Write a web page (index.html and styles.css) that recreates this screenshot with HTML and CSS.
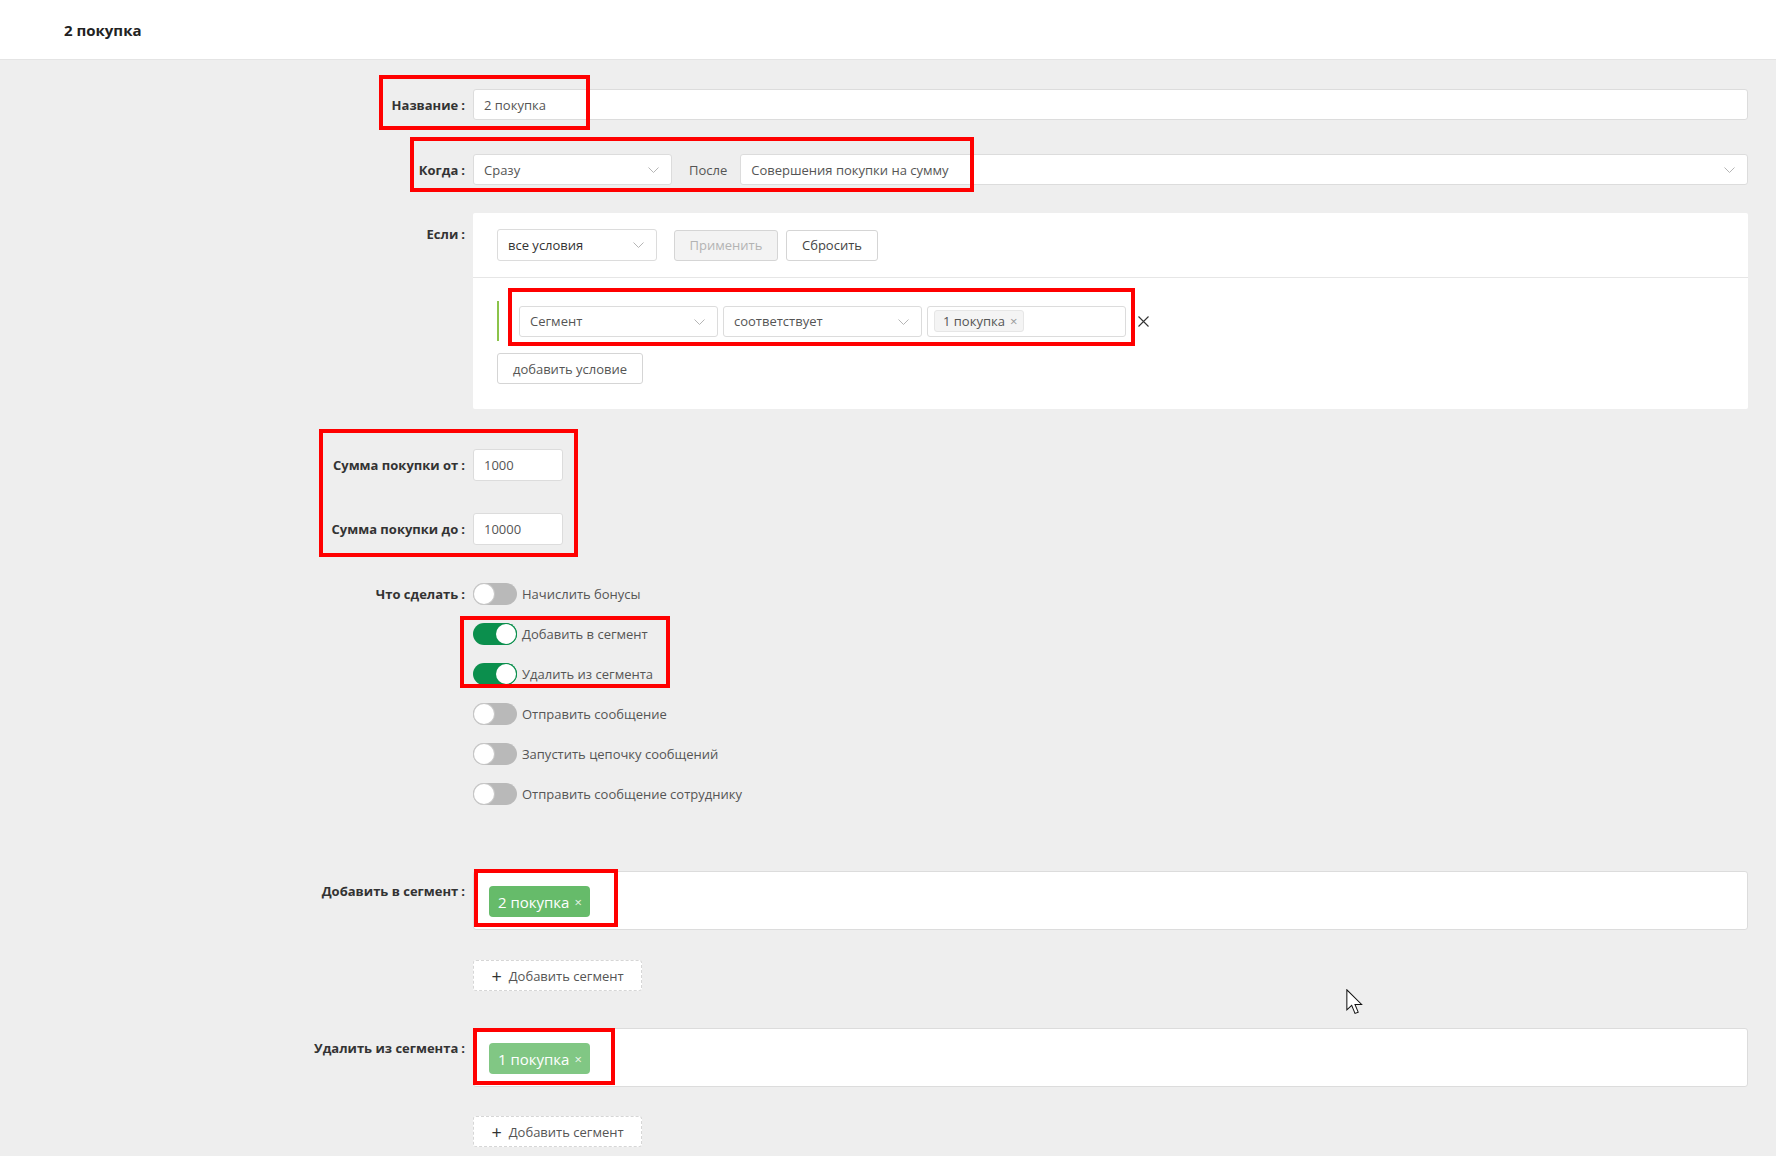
FILE: index.html
```html
<!DOCTYPE html>
<html lang="ru">
<head>
  <meta charset="UTF-8">
  <title>2 покупка</title>
  <link rel="stylesheet" href="styles.css">
</head>
<body>
  <header class="topbar">
    <h1>2 покупка</h1>
  </header>

  <main class="form">
    <!-- Название -->
    <div class="row row-name">
      <div class="label">Название</div>
      <div class="control">
        <div class="field">2 покупка</div>
      </div>
    </div>

    <!-- Когда -->
    <div class="row row-when">
      <div class="label">Когда</div>
      <div class="control when">
        <div class="field select select-short">Сразу<svg class="chev" viewBox="0 0 11 6"><polyline points="0.5,0.5 5.5,5.5 10.5,0.5"/></svg></div>
        <span class="after">После</span>
        <div class="field select select-grow">Совершения покупки на сумму<svg class="chev" viewBox="0 0 11 6"><polyline points="0.5,0.5 5.5,5.5 10.5,0.5"/></svg></div>
      </div>
    </div>

    <!-- Если -->
    <div class="row row-if">
      <div class="label label-top">Если</div>
      <div class="control">
        <div class="panel">
          <div class="panel-head">
            <div class="field select select-mode">все условия<svg class="chev" viewBox="0 0 11 6"><polyline points="0.5,0.5 5.5,5.5 10.5,0.5"/></svg></div>
            <button class="btn btn-disabled">Применить</button>
            <button class="btn btn-reset">Сбросить</button>
          </div>
          <div class="panel-body">
            <div class="cond">
              <div class="field select select-cond">Сегмент<svg class="chev" viewBox="0 0 11 6"><polyline points="0.5,0.5 5.5,5.5 10.5,0.5"/></svg></div>
              <div class="field select select-cond">соответствует<svg class="chev" viewBox="0 0 11 6"><polyline points="0.5,0.5 5.5,5.5 10.5,0.5"/></svg></div>
              <div class="field select-cond multi"><span class="chip">1 покупка <span class="x">×</span></span></div>
              <svg class="remove" viewBox="0 0 11 11" width="11" height="11"><path d="M0.5,0.5 L10.5,10.5 M10.5,0.5 L0.5,10.5"/></svg>
            </div>
            <button class="btn btn-add">добавить условие</button>
          </div>
        </div>
      </div>
    </div>

    <!-- Сумма -->
    <div class="row row-sum1">
      <div class="label">Сумма покупки от</div>
      <div class="control"><div class="field num">1000</div></div>
    </div>
    <div class="row row-sum2">
      <div class="label">Сумма покупки до</div>
      <div class="control"><div class="field num">10000</div></div>
    </div>

    <!-- Что сделать -->
    <div class="row row-actions">
      <div class="label label-toggle">Что сделать</div>
      <div class="control toggles">
        <div class="toggle-line"><span class="switch"></span>Начислить бонусы</div>
        <div class="toggle-line"><span class="switch on"></span>Добавить в сегмент</div>
        <div class="toggle-line"><span class="switch on"></span>Удалить из сегмента</div>
        <div class="toggle-line"><span class="switch"></span>Отправить сообщение</div>
        <div class="toggle-line"><span class="switch"></span>Запустить цепочку сообщений</div>
        <div class="toggle-line"><span class="switch"></span>Отправить сообщение сотруднику</div>
      </div>
    </div>

    <!-- Добавить в сегмент -->
    <div class="row row-add">
      <div class="label label-seg">Добавить в сегмент</div>
      <div class="control">
        <div class="seg-box"><span class="seg-tag">2 покупка <span class="x">×</span></span></div>
      </div>
    </div>
    <div class="row row-addbtn1">
      <div></div>
      <div class="control"><button class="btn-dashed"><span class="plus">+</span>Добавить сегмент</button></div>
    </div>

    <!-- Удалить из сегмента -->
    <div class="row row-del">
      <div class="label label-seg">Удалить из сегмента</div>
      <div class="control">
        <div class="seg-box"><span class="seg-tag faded">1 покупка <span class="x">×</span></span></div>
      </div>
    </div>
    <div class="row row-addbtn2">
      <div></div>
      <div class="control"><button class="btn-dashed"><span class="plus">+</span>Добавить сегмент</button></div>
    </div>
  </main>

  <!-- пометки поверх скриншота -->
  <div class="mark m1"></div>
  <div class="mark m2"></div>
  <div class="mark m3"></div>
  <div class="mark m4"></div>
  <div class="mark m5"></div>
  <div class="mark m6"></div>
  <div class="mark m7"></div>

  <svg class="cursor" viewBox="0 0 14 22" width="18" height="28">
    <path d="M0.6,0.6 L0.6,16.4 L4.4,12.9 L7,19.2 L9.5,18.2 L7,12.1 L12.2,12.1 Z" fill="#fff" stroke="#111" stroke-width="0.8" stroke-linejoin="miter"/>
  </svg>
</body>
</html>
```

FILE: styles.css
```css
/* базовые */
html, body {
  margin: 0;
  padding: 0;
  background-color: #eeeeee;
  color: #333;
  font-family: 'Open Sans', 'Liberation Sans', sans-serif;
  font-size: 13px;
}
*, *::before, *::after {
  box-sizing: border-box;
}
body {
  position: relative;
  min-height: 1156px;
}
/* шапка */
.topbar {
  height: 60px;
  background-color: #fff;
  border-bottom: 1px solid #e4e4e4;
  display: flex;
  align-items: center;
  padding-left: 64px;
}
.topbar h1 {
  margin: 0;
  font-size: 15px;
  font-weight: 700;
  color: #222;
}
/* форма */
.form {
  padding: 29px 28px 0 0;
}
.row {
  display: grid;
  grid-template-columns: 465px 1fr;
  column-gap: 8px;
  align-items: center;
}
.label {
  text-align: right;
  font-weight: 700;
  color: #333;
  white-space: nowrap;
}
.label::after {
  content: ':';
  margin-left: 3px;
}
.label-top {
  align-self: start;
  padding-top: 12px;
}
.label-seg {
  align-self: start;
  padding-top: 11px;
}
.label-toggle {
  align-self: start;
  padding-top: 2px;
}
.row-name { margin-bottom: 34px; }
.row-when { margin-bottom: 28px; }
.row-if { margin-bottom: 40px; }
.row-sum1 { margin-bottom: 32px; }
.row-sum2 { margin-bottom: 38px; }
.row-actions { margin-bottom: 66px; }
.row-add { margin-bottom: 30px; }
.row-addbtn1 { margin-bottom: 37px; }
.row-del { margin-bottom: 29px; }

.field {
  position: relative;
  height: 31px;
  background-color: #fff;
  border: 1px solid #dcdcdc;
  border-radius: 3px;
  padding: 0 10px;
  display: flex;
  align-items: center;
  color: #555;
  white-space: nowrap;
}
.select {
  padding-right: 30px;
}
.chev {
  position: absolute;
  right: 12px;
  top: 12px;
  width: 11px;
  height: 6px;
  fill: none;
  stroke: #b5b5b5;
  stroke-width: 1;
}
.when {
  display: flex;
  align-items: center;
}
.select-short { width: 199px; }
.after {
  margin: 0 13px 0 17px;
  color: #555;
}
.select-grow { flex: 1; }
.num { width: 90px; height: 32px; }

/* Если */
.panel {
  background-color: #fff;
  border-radius: 2px;
}
.panel-head {
  display: flex;
  align-items: center;
  padding: 16px 24px;
  border-bottom: 1px solid #e6e6e6;
}
.select-mode {
  width: 160px;
  height: 32px;
  color: #333;
}
.btn {
  height: 31px;
  padding: 0 13px;
  font-family: inherit;
  font-size: 13px;
  color: #444;
  background-color: #fff;
  border: 1px solid #d5d5d5;
  border-radius: 3px;
}
.panel-head .btn { margin-left: 8px; }
.panel-head .btn-disabled {
  margin-left: 17px;
  width: 104px;
  background-color: #f3f3f3;
  color: #b3b3b3;
}
.panel-head .btn-reset {
  width: 92px;
}
.panel-body {
  padding: 23px 24px 25px;
}
.cond {
  display: flex;
  align-items: center;
  gap: 5px;
  height: 40px;
  border-left: 2px solid #8bc34a;
  padding-left: 20px;
}
.select-cond { width: 199px; }
.multi { padding: 0 6px; }
.chip {
  display: inline-flex;
  align-items: center;
  height: 22px;
  padding: 0 6px 0 8px;
  background-color: #f4f4f4;
  border: 1px solid #e6e6e6;
  border-radius: 3px;
  color: #555;
}
.chip .x {
  margin-left: 5px;
  color: #999;
}
.remove {
  margin-left: 7px;
  fill: none;
  stroke: #333;
  stroke-width: 1.1;
}
.btn-add {
  margin-top: 12px;
  width: 146px;
  color: #555;
}

/* переключатели */
.toggles {
  display: flex;
  flex-direction: column;
  gap: 18px;
}
.toggle-line {
  display: flex;
  align-items: center;
  color: #555;
  height: 22px;
}
.switch {
  position: relative;
  width: 44px;
  height: 22px;
  border-radius: 11px;
  background-color: #b9b9b9;
  margin-right: 5px;
  flex-shrink: 0;
}
.switch::after {
  content: '';
  position: absolute;
  left: 1px;
  top: 1px;
  width: 20px;
  height: 20px;
  border-radius: 50%;
  background-color: #fff;
  box-shadow: 0 0 0 1px #c8c8c8;
}
.switch.on {
  background-color: #0b8f4d;
}
.switch.on::after {
  left: auto;
  right: 1px;
  box-shadow: 0 0 0 1px #0b8f4d;
}

/* сегменты */
.seg-box {
  height: 59px;
  background-color: #fff;
  border: 1px solid #dcdcdc;
  border-radius: 3px;
  padding: 14px 15px;
}
.seg-tag {
  display: inline-flex;
  align-items: center;
  height: 31px;
  padding: 0 8px 0 9px;
  background-color: #66bb6a;
  border-radius: 4px;
  color: #fff;
  font-size: 15px;
}
.seg-tag.faded {
  background-color: #81c784;
}
.seg-tag .x {
  margin-left: 5px;
  font-size: 13px;
  opacity: 0.85;
}
.btn-dashed {
  width: 169px;
  height: 31px;
  font-family: inherit;
  font-size: 13px;
  color: #555;
  background-color: #fff;
  border: 1px dashed #d6d6d6;
  border-radius: 3px;
  display: flex;
  align-items: center;
  justify-content: center;
}
.plus {
  font-size: 18px;
  font-weight: 400;
  color: #333;
  margin-right: 7px;
  line-height: 1;
}

/* красные рамки-пометки */
.mark {
  position: absolute;
  border: 4px solid #ff0000;
}
.m1 { left: 379px; top: 75px; width: 211px; height: 55px; }
.m2 { left: 410px; top: 137px; width: 564px; height: 55px; }
.m3 { left: 508px; top: 288px; width: 627px; height: 58px; }
.m4 { left: 319px; top: 429px; width: 259px; height: 128px; }
.m5 { left: 460px; top: 616px; width: 210px; height: 72px; }
.m6 { left: 474px; top: 869px; width: 144px; height: 58px; }
.m7 { left: 473px; top: 1028px; width: 142px; height: 57px; }

.cursor {
  position: absolute;
  left: 1346px;
  top: 989px;
}
```
